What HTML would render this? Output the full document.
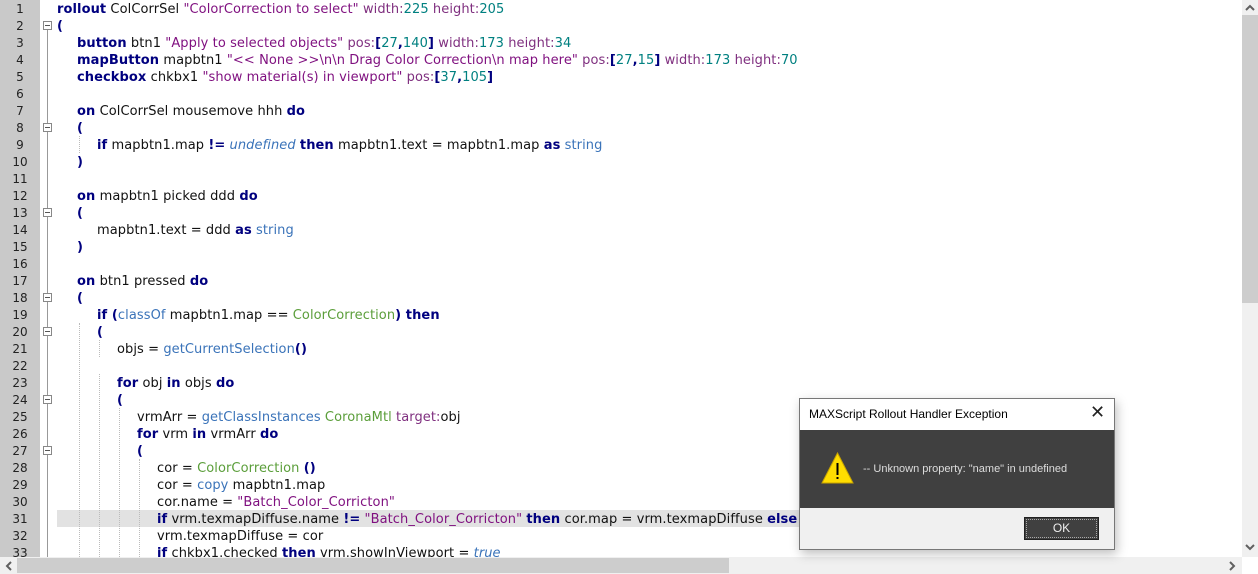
<!DOCTYPE html><html><head><style>
body{margin:0;width:1258px;height:574px;overflow:hidden;background:#fff;font-family:"DejaVu Sans","Liberation Sans",sans-serif;font-size:13px;position:relative}
.g{position:absolute;left:0;top:0;width:40px;height:557px;background:#c9c9c9}
.n{position:absolute;left:0;width:40px;text-align:center;color:#222;font-size:12px;line-height:17px;margin-top:1px}
.l{position:absolute;line-height:17px;white-space:pre;color:#111;margin-top:1px;letter-spacing:0.08px}
b{color:#00007f}
.s{color:#7f0f7f}.d{color:#008080}.f{color:#3a73b9}.c{color:#5b9e3a}.i{color:#3a73b9;font-style:italic}.p{color:#7f2f7f}
.fb{position:absolute;left:43px;width:7px;height:7px;border:1px solid #888;background:#fff}
.fb:after{content:"";position:absolute;left:1px;top:3px;width:5px;height:1px;background:#555}
.vl{position:absolute;left:47px;width:1px;background:#999}
.ig{position:absolute;width:0;border-left:1px dotted #bbb}
</style></head><body>
<div class="g"></div>
<div class="vl" style="top:21px;height:536px"></div>
<div style="position:absolute;left:57px;top:510px;width:742px;height:17px;background:#e2e2e2"></div>
<div class="ig" style="left:79px;top:136px;height:17px"></div>
<div class="ig" style="left:79px;top:323px;height:234px"></div>
<div class="ig" style="left:99px;top:340px;height:17px"></div>
<div class="ig" style="left:99px;top:374px;height:183px"></div>
<div class="ig" style="left:119px;top:408px;height:149px"></div>
<div class="ig" style="left:139px;top:459px;height:98px"></div>
<div class="fb" style="top:21px"></div><div class="fb" style="top:123px"></div><div class="fb" style="top:208px"></div><div class="fb" style="top:293px"></div><div class="fb" style="top:327px"></div><div class="fb" style="top:395px"></div><div class="fb" style="top:446px"></div>
<div id="nums"></div>
<div class="l" style="left:57px;top:0"><b>rollout</b> ColCorrSel <span class="s">"ColorCorrection to select"</span> <span class="p">width:</span><span class="d">225</span> <span class="p">height:</span><span class="d">205</span></div>
<div class="l" style="left:57px;top:17px"><b>(</b></div>
<div class="l" style="left:77px;top:34px"><b>button</b> btn1 <span class="s">"Apply to selected objects"</span> <span class="p">pos:</span><b>[</b><span class="d">27</span><b>,</b><span class="d">140</span><b>]</b> <span class="p">width:</span><span class="d">173</span> <span class="p">height:</span><span class="d">34</span></div>
<div class="l" style="left:77px;top:51px"><b>mapButton</b> mapbtn1 <span class="s">"&lt;&lt; None &gt;&gt;\n\n Drag Color Correction\n map here"</span> <span class="p">pos:</span><b>[</b><span class="d">27</span><b>,</b><span class="d">15</span><b>]</b> <span class="p">width:</span><span class="d">173</span> <span class="p">height:</span><span class="d">70</span></div>
<div class="l" style="left:77px;top:68px"><b>checkbox</b> chkbx1 <span class="s">"show material(s) in viewport"</span> <span class="p">pos:</span><b>[</b><span class="d">37</span><b>,</b><span class="d">105</span><b>]</b></div>
<div class="l" style="left:77px;top:102px"><b>on</b> ColCorrSel mousemove hhh <b>do</b></div>
<div class="l" style="left:77px;top:119px"><b>(</b></div>
<div class="l" style="left:97px;top:136px"><b>if</b> mapbtn1.map <b>!=</b> <span class="i">undefined</span> <b>then</b> mapbtn1.text = mapbtn1.map <b>as</b> <span class="f">string</span></div>
<div class="l" style="left:77px;top:153px"><b>)</b></div>
<div class="l" style="left:77px;top:187px"><b>on</b> mapbtn1 picked ddd <b>do</b></div>
<div class="l" style="left:77px;top:204px"><b>(</b></div>
<div class="l" style="left:97px;top:221px">mapbtn1.text = ddd <b>as</b> <span class="f">string</span></div>
<div class="l" style="left:77px;top:238px"><b>)</b></div>
<div class="l" style="left:77px;top:272px"><b>on</b> btn1 pressed <b>do</b></div>
<div class="l" style="left:77px;top:289px"><b>(</b></div>
<div class="l" style="left:97px;top:306px"><b>if (</b><span class="f">classOf</span> mapbtn1.map == <span class="c">ColorCorrection</span><b>) then</b></div>
<div class="l" style="left:97px;top:323px"><b>(</b></div>
<div class="l" style="left:117px;top:340px">objs = <span class="f">getCurrentSelection</span><b>()</b></div>
<div class="l" style="left:117px;top:374px"><b>for</b> obj <b>in</b> objs <b>do</b></div>
<div class="l" style="left:117px;top:391px"><b>(</b></div>
<div class="l" style="left:137px;top:408px">vrmArr = <span class="f">getClassInstances</span> <span class="c">CoronaMtl</span> <span class="p">target:</span>obj</div>
<div class="l" style="left:137px;top:425px"><b>for</b> vrm <b>in</b> vrmArr <b>do</b></div>
<div class="l" style="left:137px;top:442px"><b>(</b></div>
<div class="l" style="left:157px;top:459px">cor = <span class="c">ColorCorrection</span> <b>()</b></div>
<div class="l" style="left:157px;top:476px">cor = <span class="f">copy</span> mapbtn1.map</div>
<div class="l" style="left:157px;top:493px">cor.name = <span class="s">"Batch_Color_Corricton"</span></div>
<div class="l" style="left:157px;top:510px"><b>if</b> vrm.texmapDiffuse.name <b>!=</b> <span class="s">"Batch_Color_Corricton"</span> <b>then</b> cor.map = vrm.texmapDiffuse <b>else</b> cor</div>
<div class="l" style="left:157px;top:527px">vrm.texmapDiffuse = cor</div>
<div class="l" style="left:157px;top:544px"><b>if</b> chkbx1.checked <b>then</b> vrm.showInViewport = <span class="i">true</span></div>
<div style="position:absolute;left:1242px;top:0;width:16px;height:557px;background:#f0f0f0"></div>
<div style="position:absolute;left:1242px;top:15px;width:16px;height:288px;background:#cdcdcd"></div>
<svg style="position:absolute;left:1245px;top:4px" width="10" height="7"><path d="M1 6 L5 2 L9 6" stroke="#606060" stroke-width="2" fill="none"/></svg>
<svg style="position:absolute;left:1245px;top:544px" width="10" height="7"><path d="M1 1 L5 5 L9 1" stroke="#606060" stroke-width="2" fill="none"/></svg>
<div style="position:absolute;left:0;top:557px;width:1242px;height:17px;background:#f0f0f0"></div>
<div style="position:absolute;left:17px;top:558px;width:712px;height:15px;background:#cdcdcd"></div>
<svg style="position:absolute;left:5px;top:561px" width="7" height="10"><path d="M6 1 L2 5 L6 9" stroke="#606060" stroke-width="2" fill="none"/></svg>
<svg style="position:absolute;left:1229px;top:561px" width="7" height="10"><path d="M1 1 L5 5 L1 9" stroke="#606060" stroke-width="2" fill="none"/></svg>
<div style="position:absolute;left:799px;top:398px;width:314px;height:150px;border:1px solid #777;background:#f0f0f0;box-shadow:2px 4px 10px rgba(0,0,0,.25);font-family:'Liberation Sans',sans-serif">
<div style="height:31px;background:#fff;position:relative"><span style="position:absolute;left:9px;top:8px;font-size:12px;color:#000">MAXScript Rollout Handler Exception</span><span style="position:absolute;left:290px;top:3px;font-size:18px;color:#222">&#x2715;</span></div>
<div style="height:78px;background:#404040;position:relative">
<svg style="position:absolute;left:21px;top:22px" width="33" height="33"><polygon points="16.5,1 32,31 1,31" fill="#ffdd00" stroke="#c8a400"/><rect x="15.5" y="11" width="2" height="12" fill="#000"/><rect x="15.5" y="25" width="2" height="2" fill="#000"/></svg>
<span style="position:absolute;left:63px;top:33px;font-size:11px;color:#ddd">-- Unknown property: "name" in undefined</span></div>
<div style="position:absolute;left:224px;top:118px;width:73px;height:21px;background:#404040;border:1px solid #222;outline:1px dotted #aaa;outline-offset:-3px;color:#eee;font-size:12px;text-align:center;line-height:21px">OK</div>
</div>
<script>
var h='';for(var i=1;i<=33;i++)h+='<div class="n" style="top:'+(17*(i-1))+'px">'+i+'</div>';document.getElementById('nums').innerHTML=h;
</script>
</body></html>
